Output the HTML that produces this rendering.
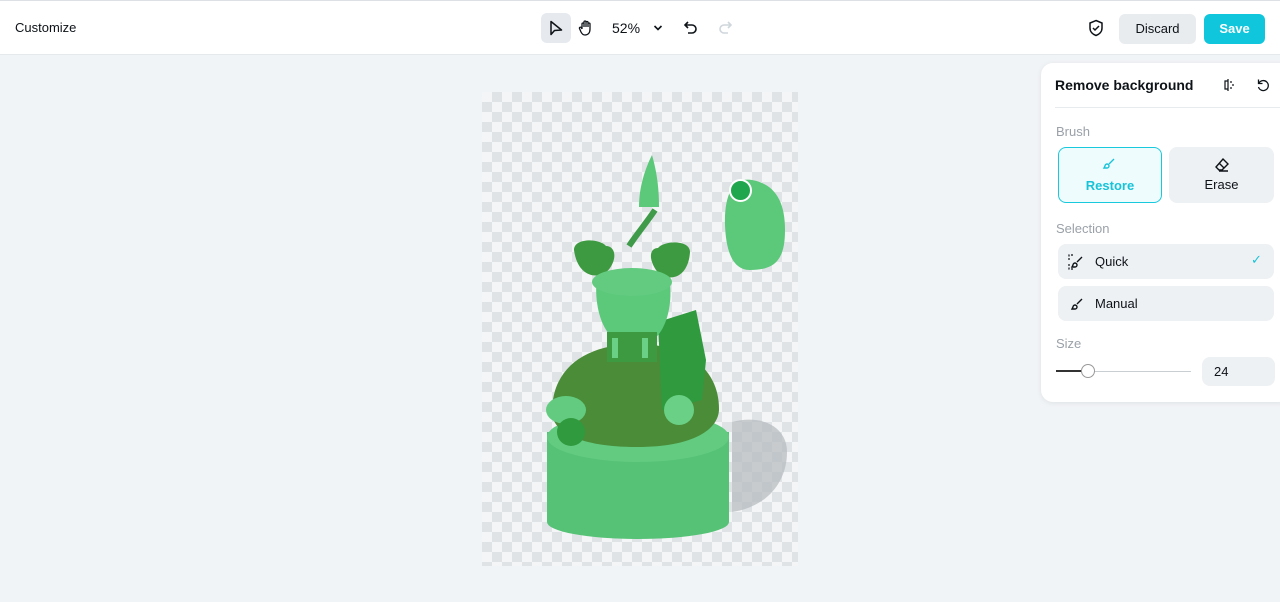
<!DOCTYPE html>
<html><head><style>
*{box-sizing:border-box;margin:0;padding:0}
body{width:1280px;height:602px;background:#f1f4f7;font-family:"Liberation Sans",sans-serif;position:relative;overflow:hidden;color:#0e1318}
.top{position:absolute;left:0;top:0;width:1280px;height:55px;background:#fff;border-top:1px solid #dde1e5;border-bottom:1px solid #e6e9ec}
.abs{position:absolute}
.canvas{position:absolute;left:482px;top:92px;width:316px;height:474px;background-color:#f4f5f6;background-image:linear-gradient(45deg,#dfe3e6 25%,transparent 25%,transparent 75%,#dfe3e6 75%),linear-gradient(45deg,#dfe3e6 25%,transparent 25%,transparent 75%,#dfe3e6 75%);background-size:20px 20px;background-position:0 0,10px 10px}
.panel{position:absolute;left:1041px;top:63px;width:250px;height:339px;background:#fff;border-radius:12px;box-shadow:0 1px 6px rgba(0,0,0,.08)}
.btn{position:absolute;border-radius:8px;font-size:13px}
.lbl{position:absolute;font-size:13px;color:#9aa1a8}
</style></head><body>
<div class="top">
 <div class="abs" style="left:15px;top:19px;font-size:13px">Customize</div>
 <div class="abs" style="left:541px;top:12px;width:30px;height:30px;background:#e6eaee;border-radius:6px"></div>
 <svg class="abs" style="left:548px;top:19px" width="16" height="16" viewBox="0 0 16 16"><path d="M3 1.5L3 14.5 6.5 10.5 13.5 10Z" fill="none" stroke="#0e1318" stroke-width="1.5" stroke-linejoin="round"/></svg>
 <svg class="abs" style="left:577px;top:18px" width="18" height="18" viewBox="0 0 18 18"><path d="M5 10V5a1 1 0 012 0v3M7 8V3a1 1 0 012 0v5M9 8V3.5a1 1 0 012 0V8M11 8V5a1 1 0 012 0v5c0 4-2 6-5 6-2 0-3-1-4-3L2.5 9.5a1 1 0 011.7-1L5 10" fill="none" stroke="#0e1318" stroke-width="1.3" stroke-linejoin="round"/></svg>
 <div class="abs" style="left:612px;top:19px;font-size:14px">52%</div>
 <svg class="abs" style="left:653px;top:23px" width="10" height="8" viewBox="0 0 10 8"><path d="M1.5 2l3.5 3.5L8.5 2" fill="none" stroke="#0e1318" stroke-width="1.6"/></svg>
 <svg class="abs" style="left:683px;top:19px" width="16" height="16" viewBox="0 0 16 16"><path d="M5 2L2 5l3 3M2 5h7a4 4 0 010 8H5" fill="none" stroke="#0e1318" stroke-width="1.6"/></svg>
 <svg class="abs" style="left:717px;top:19px" width="16" height="16" viewBox="0 0 16 16"><path d="M11 2l3 3-3 3M14 5H7a4 4 0 000 8h4" fill="none" stroke="#cfd6dc" stroke-width="1.6"/></svg>
 <svg class="abs" style="left:1087px;top:18px" width="18" height="18" viewBox="0 0 18 18"><path d="M9 1.5l6 2.5v5c0 4-3 6.5-6 7.5-3-1-6-3.5-6-7.5V4z" fill="none" stroke="#0e1318" stroke-width="1.5"/><path d="M6 9l2 2 4-4" fill="none" stroke="#0e1318" stroke-width="1.5"/></svg>
 <div class="abs" style="left:1119px;top:13px;width:77px;height:30px;background:#e8ecef;border-radius:6px;font-size:13px;text-align:center;line-height:30px">Discard</div>
 <div class="abs" style="left:1204px;top:13px;width:61px;height:30px;background:#0fc6dc;border-radius:6px;font-size:13px;font-weight:bold;color:#fff;text-align:center;line-height:30px">Save</div>
</div>
<div class="canvas">
<svg width="316" height="474" viewBox="0 0 316 474">
 <path d="M250 330c30-8 55 5 55 30 0 30-20 55-55 60z" fill="#b4b9bd" opacity=".7"/>
 <path d="M170 63c4 14 7 30 7 52h-20c0-20 6-38 13-52z" fill="#5bc87a"/>
 <path d="M270 88c22 4 33 20 33 50 0 30-10 40-35 40-18 0-24-20-25-45-1-30 8-48 27-45z" fill="#5bc87a"/>
 <path d="M173 118c-8 12-18 24-26 36" stroke="#3f9a4a" stroke-width="6" fill="none"/>
 <rect x="65" y="340" width="182" height="90" fill="#56c276"/>
 <ellipse cx="156" cy="430" rx="91" ry="17" fill="#56c276"/>
 <ellipse cx="156" cy="345" rx="91" ry="25" fill="#62cb80"/>
 <path d="M70 320c0-45 35-68 85-68s82 25 82 65c0 20-25 38-82 38s-85-15-85-35z" fill="#4a8c38"/>
 <path d="M176 230l38-12 10 50-4 40-40 10z" fill="#2f9a3e"/>
 <path d="M92 158c0-12 25-12 32-4 8 0 12 10 4 22-8 12-32 12-36-18zM208 160c0-12-25-12-32-4-8 0-10 10-2 22 8 12 32 12 34-18z" fill="#3d9a40"/>
 <path d="M115 185c15-8 50-8 72 0 4 20 0 50-15 62h-40c-15-12-20-40-17-62z" fill="#5bc87a"/>
 <ellipse cx="150" cy="190" rx="40" ry="14" fill="#62cb80"/>
 <rect x="125" y="240" width="50" height="30" fill="#3d9a40"/>
 <rect x="130" y="246" width="6" height="20" fill="#6ad085"/><rect x="160" y="246" width="6" height="20" fill="#6ad085"/>
 <ellipse cx="84" cy="318" rx="20" ry="14" fill="#62cb80"/>
 <ellipse cx="197" cy="318" rx="15" ry="15" fill="#6ad085"/>
 <ellipse cx="89" cy="340" rx="14" ry="14" fill="#2f9a3e"/>
</svg>
 <div class="abs" style="left:247px;top:87px;width:23px;height:23px;border-radius:50%;background:#20a64c;border:2px solid #fff"></div>
</div>
<div class="panel">
 <div class="abs" style="left:14px;top:14px;font-size:14px;font-weight:bold">Remove background</div>
 <svg class="abs" style="left:181px;top:15px" width="14" height="14" viewBox="0 0 14 14"><path d="M3 3h3v8H3zM6 1v12M9 3v2M9 9v2M11 6v2" fill="none" stroke="#0e1318" stroke-width="1.2"/></svg>
 <svg class="abs" style="left:215px;top:15px" width="14" height="14" viewBox="0 0 14 14"><path d="M3 5a5 5 0 11-0.5 4M2.5 1.5V5.5H6.5" fill="none" stroke="#0e1318" stroke-width="1.3"/></svg>
 <div class="abs" style="left:14px;top:44px;width:225px;height:1px;background:#e8ebee"></div>
 <div class="lbl" style="left:15px;top:61px">Brush</div>
 <div class="btn" style="left:17px;top:84px;width:104px;height:56px;background:#eefcfe;border:1px solid #18c9dd;color:#18c3d8;font-weight:bold;text-align:center;padding-top:30px">Restore</div>
 <svg class="abs" style="left:61px;top:94px" width="14" height="14" viewBox="0 0 14 14"><path d="M12 2L7 7M3 9a2 2 0 112 2H2z" fill="none" stroke="#18c3d8" stroke-width="1.4"/></svg>
 <div class="btn" style="left:128px;top:84px;width:105px;height:56px;background:#eef1f4;text-align:center;padding-top:30px">Erase</div>
 <svg class="abs" style="left:173px;top:94px" width="16" height="16" viewBox="0 0 16 16"><path d="M9 2l5 5-6 6H5L2 10zM5 6l5 5M5 14h9" fill="none" stroke="#0e1318" stroke-width="1.4"/></svg>
 <div class="lbl" style="left:15px;top:158px">Selection</div>
 <div class="btn" style="left:17px;top:181px;width:216px;height:35px;background:#eef1f4"><span class="abs" style="left:37px;top:10px">Quick</span><span class="abs" style="left:193px;top:8px;color:#18c3d8">✓</span></div>
 <svg class="abs" style="left:27px;top:191px" width="16" height="16" viewBox="0 0 16 16"><path d="M1 6V1h5M1 10v5h4" fill="none" stroke="#0e1318" stroke-width="1.2" stroke-dasharray="2 1.5"/><path d="M14 3l-5 5M5 11a2 2 0 112 2H4z" fill="none" stroke="#0e1318" stroke-width="1.4"/></svg>
 <div class="btn" style="left:17px;top:223px;width:216px;height:35px;background:#eef1f4"><span class="abs" style="left:37px;top:10px">Manual</span></div>
 <svg class="abs" style="left:27px;top:233px" width="16" height="16" viewBox="0 0 16 16"><path d="M14 3l-5 5M5 11a2 2 0 112 2H4z" fill="none" stroke="#0e1318" stroke-width="1.4"/></svg>
 <div class="lbl" style="left:15px;top:273px">Size</div>
 <div class="abs" style="left:15px;top:308px;width:135px;height:1px;background:#c9ced3"></div>
 <div class="abs" style="left:15px;top:307px;width:30px;height:2px;background:#333"></div>
 <div class="abs" style="left:40px;top:301px;width:14px;height:14px;border-radius:50%;background:#fff;border:1px solid #999"></div>
 <div class="btn" style="left:161px;top:294px;width:73px;height:29px;background:#eef1f4;padding:7px 12px">24</div>
</div>
</body></html>
